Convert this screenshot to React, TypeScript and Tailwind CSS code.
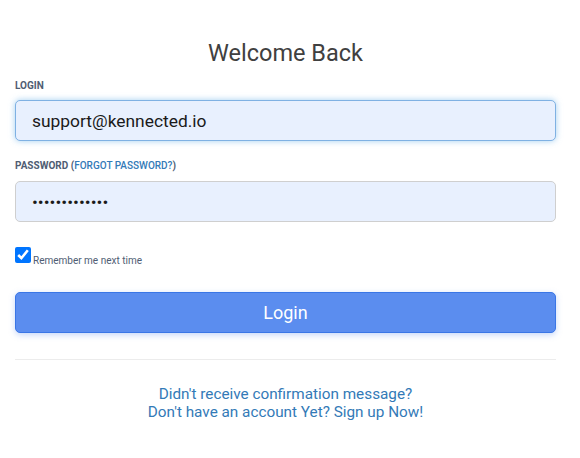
export default function App() {
  return (
    <div className="min-h-[458px] w-full bg-white pl-[15px] pr-[24px] font-['Roboto',sans-serif]">
      <h1 className="pt-[39px] text-center text-[23.5px] leading-[28px] font-normal text-[#404040]">
        Welcome Back
      </h1>

      {/* login field */}
      <label className="mt-[13px] block text-[10px] leading-[12px] font-bold uppercase text-[#4f5d73]">
        Login
      </label>
      <input
        type="text"
        defaultValue="support@kennected.io"
        className="mt-[8px] block h-[41px] w-full rounded-[5px] border border-[#7fb1e3] bg-[#e8f0fe] px-[16px] text-[17.4px] text-[#1a1a1a] shadow-[0_0_6px_rgba(102,175,233,0.6)] outline-none"
      />

      {/* password field */}
      <label className="mt-[19px] block text-[10px] leading-[12px] font-bold uppercase text-[#4f5d73]">
        Password (<a href="#" className="font-medium text-[#337ab7]">Forgot password?</a>)
      </label>
      <input
        type="password"
        defaultValue="kennected1234"
        className="mt-[9px] block h-[41px] w-full rounded-[5px] border border-[#cfcfcf] bg-[#e8f0fe] px-[16px] text-[17.4px] text-[#1a1a1a] outline-none"
      />

      <div className="mt-[25px] flex items-end">
        <input type="checkbox" defaultChecked className="m-0 h-4 w-4 accent-[#0075ff]" />
        <span className="mb-[-3px] ml-[2px] text-[10px] leading-[10px] text-[#4f5d73]">Remember me next time</span>
      </div>

      <button className="mt-[29px] block h-[41px] w-full rounded-[5px] border border-[#3a76e6] bg-[#5b8def] text-[18px] text-white shadow-[0_2px_6px_rgba(91,141,239,0.35)]">
        Login
      </button>

      <div className="mt-[26px] border-t border-[#ececec]" />

      <div className="mt-[25px] flex flex-col items-center text-[15.3px] leading-[18px] text-[#337ab7]">
        <a href="#">Didn't receive confirmation message?</a>
        <a href="#">Don't have an account Yet? Sign up Now!</a>
      </div>
    </div>
  );
}
